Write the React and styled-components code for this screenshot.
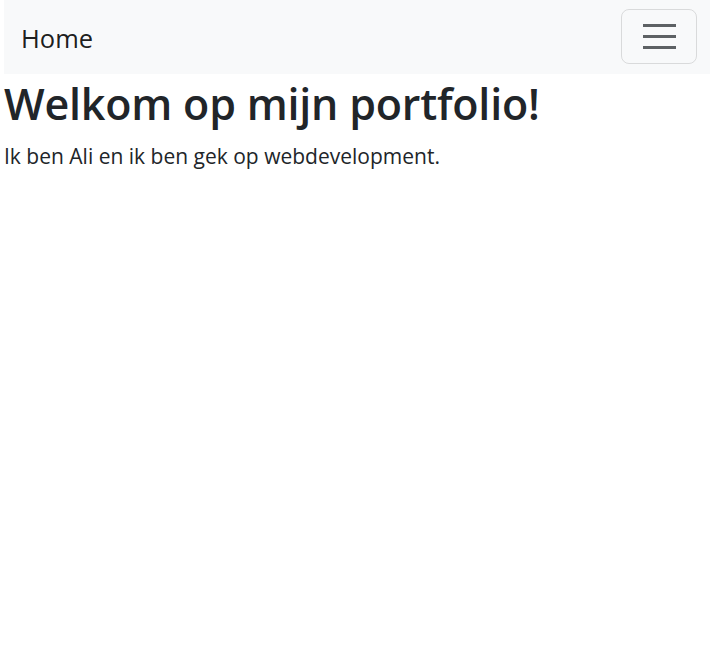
import React from "react";
import styled, { createGlobalStyle } from "styled-components";

const GlobalStyle = createGlobalStyle`
  body {
    margin: 0;
    background: #fff;
    font-family: "Open Sans", "Noto Sans", sans-serif;
    color: #212529;
  }
`;

const Page = styled.div`
  padding: 0 0 0 4px;
`;

const Navbar = styled.nav`
  display: flex;
  align-items: center;
  justify-content: space-between;
  height: 74px;
  padding: 0 13px 0 17px;
  background: #f8f9fa;
`;

const Brand = styled.a`
  padding-top: 2px;
  font-size: 25.5px;
  color: rgba(0, 0, 0, 0.9);
  text-decoration: none;
`;

const Toggler = styled.button`
  display: flex;
  flex-direction: column;
  justify-content: center;
  gap: 8px;
  align-items: center;
  width: 76px;
  height: 55px;
  margin-bottom: 2px;
  padding: 0;
  background: transparent;
  border: 1px solid rgba(0, 0, 0, 0.12);
  border-radius: 8px;
`;

const Bar = styled.span`
  display: block;
  width: 33px;
  height: 3px;
  background: rgba(33, 37, 41, 0.72);
`;

const Title = styled.h1`
  margin: 4px 0 11px;
  font-size: 43px;
  font-weight: 600;
  line-height: 1.2;
  letter-spacing: -0.2px;
`;

const Intro = styled.p`
  margin: 0;
  font-size: 21px;
  line-height: 1.5;
`;

export default function App() {
  return (
    <>
      <GlobalStyle />
      <Page>
        <Navbar>
          <Brand href="#">Home</Brand>
          <Toggler aria-label="Toggle navigation">
            <Bar />
            <Bar />
            <Bar />
          </Toggler>
        </Navbar>
        <Title>Welkom op mijn portfolio!</Title>
        <Intro>Ik ben Ali en ik ben gek op webdevelopment.</Intro>
      </Page>
    </>
  );
}
